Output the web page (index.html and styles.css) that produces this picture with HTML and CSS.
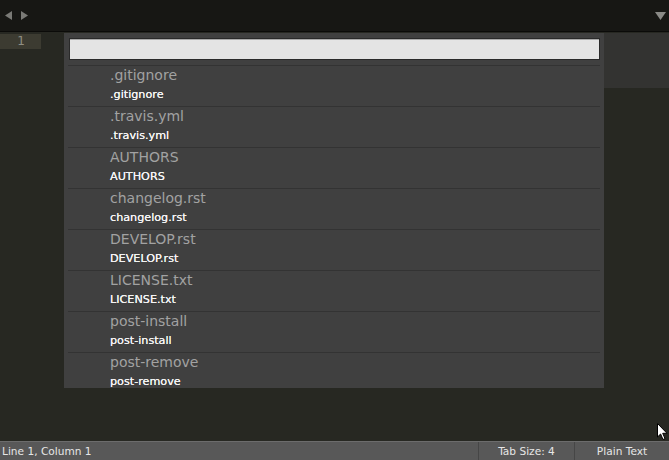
FILE: index.html
```html
<!DOCTYPE html>
<html>
<head>
<meta charset="utf-8">
<link rel="stylesheet" href="styles.css">
</head>
<body>
<div class="window">
  <div class="tabbar">
    <div class="nav">
      <svg class="navicon" width="24" height="10" viewBox="0 0 24 10"><path d="M7 0 L7 9 L0 4.5 Z" fill="#7a7a76"/><path d="M16 0 L16 9 L23 4.5 Z" fill="#7a7a76"/></svg>
    </div>
    <svg class="menuicon" width="11" height="8" viewBox="0 0 11 8"><path d="M0 0 L11 0 L5.5 8 Z" fill="#8a8a86"/></svg>
  </div>
  <div class="editor">
    <div class="gutter">
      <div class="lineno">1</div>
    </div>
    <div class="code"></div>
    <div class="minimap">
      <div class="viewport"></div>
    </div>
    <div class="quickpanel">
      <div class="input"></div>
      <div class="list">
        <div class="item"><div class="title">.gitignore</div><div class="sub">.gitignore</div></div>
        <div class="item"><div class="title">.travis.yml</div><div class="sub">.travis.yml</div></div>
        <div class="item"><div class="title">AUTHORS</div><div class="sub">AUTHORS</div></div>
        <div class="item"><div class="title">changelog.rst</div><div class="sub">changelog.rst</div></div>
        <div class="item"><div class="title">DEVELOP.rst</div><div class="sub">DEVELOP.rst</div></div>
        <div class="item"><div class="title">LICENSE.txt</div><div class="sub">LICENSE.txt</div></div>
        <div class="item"><div class="title">post-install</div><div class="sub">post-install</div></div>
        <div class="item"><div class="title">post-remove</div><div class="sub">post-remove</div></div>
      </div>
    </div>
    <svg class="cursor" width="12" height="18" viewBox="0 0 12 18"><path d="M0.5 0.5 L0.5 14 L3.6 11 L6 16.5 L8 15.6 L5.7 10.3 L10 10.3 Z" fill="#ffffff" stroke="#000000" stroke-width="1"/></svg>
  </div>
  <div class="statusbar">
    <div class="status-left">Line 1, Column 1</div>
    <div class="status-cell tabsize">Tab Size: 4</div>
    <div class="status-cell syntax">Plain Text</div>
  </div>
</div>
</body>
</html>
```
FILE: styles.css
```css
html, body {
  margin: 0;
  padding: 0;
  background: #272822;
}
.window {
  width: 669px;
  height: 460px;
  display: flex;
  flex-direction: column;
  font-family: "DejaVu Sans", "Liberation Sans", sans-serif;
  overflow: hidden;
}
.tabbar {
  height: 31px;
  background: #171714;
  border-bottom: 1px solid #0b0b09;
  display: flex;
  align-items: center;
  justify-content: space-between;
  padding: 0 3px 0 5px;
  flex: none;
}
.navicon { display: block; }
.menuicon { display: block; margin-top: 1px; }
.editor {
  flex: 1;
  position: relative;
  display: flex;
  background: #272822;
}
.gutter {
  width: 41px;
  flex: none;
  padding-top: 2px;
}
.lineno {
  height: 15px;
  background: #3c3b31;
  color: #8f8f84;
  font-size: 12px;
  line-height: 15px;
  text-align: right;
  padding-right: 16px;
}
.code { flex: 1; }
.minimap {
  width: 65px;
  flex: none;
  padding-top: 1px;
}
.viewport {
  height: 55px;
  background: #333331;
}
.quickpanel {
  position: absolute;
  left: 64px;
  top: 1px;
  width: 540px;
  height: 355px;
  background: #404040;
  box-sizing: border-box;
  padding: 5px 4px 0 4px;
  overflow: hidden;
}
.input {
  height: 22px;
  box-sizing: border-box;
  margin-left: 1px;
  background: #e4e4e4;
  border: 1px solid #2a2a2a;
  box-shadow: inset 0 1px 0 #a9a9a9;
}
.list {
  margin-top: 5px;
}
.item {
  height: 41px;
  box-sizing: border-box;
  border-top: 1px solid #333333;
  padding-left: 42px;
}
.title {
  font-size: 14px;
  line-height: 18px;
  color: #a2a2a2;
}
.sub {
  font-size: 11.2px;
  line-height: 19px;
  padding-top: 0.5px;
  color: #f4f4f4;
  text-shadow: 0 0 0.4px #ffffff;
}
.cursor {
  position: absolute;
  right: 0;
  bottom: 0;
}
.statusbar {
  height: 18px;
  flex: none;
  background: #585858;
  border-top: 1px solid #6c6c6c;
  display: flex;
  align-items: stretch;
  color: #e6e6e6;
  font-size: 10.6px;
  line-height: 18px;
}
.status-left {
  flex: 1;
  padding-left: 2px;
}
.status-cell {
  border-left: 1px solid #464646;
  text-align: center;
}
.tabsize { width: 95px; }
.syntax { width: 94px; }
```
